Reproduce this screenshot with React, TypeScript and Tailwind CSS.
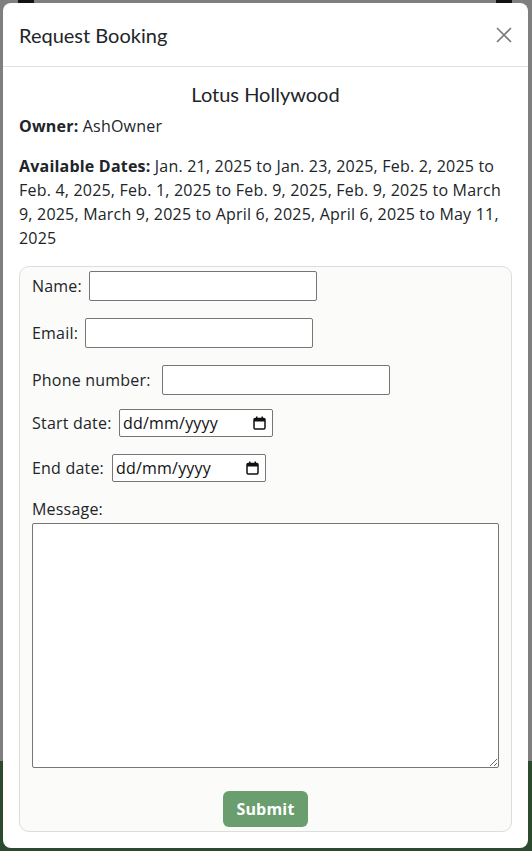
import React from "react";

const body = { fontFamily: '"Open Sans", "Noto Sans", sans-serif' };
const head = { fontFamily: 'Lato, "Open Sans", sans-serif' };

function CalendarIcon() {
  return (
    <svg width="13" height="14" viewBox="0 0 13 14" fill="none">
      <rect x="1" y="2.5" width="11" height="10.5" rx="1.2" stroke="#111" strokeWidth="1.5" />
      <rect x="1" y="2.5" width="11" height="3" fill="#111" />
      <rect x="3" y="0.5" width="1.5" height="3" fill="#111" />
      <rect x="8.5" y="0.5" width="1.5" height="3" fill="#111" />
    </svg>
  );
}

function DateBox() {
  return (
    <div className="flex h-[28px] w-[154px] items-center justify-between rounded-[2px] border border-[#767676] bg-white pl-[3px] pr-[6px] text-[16px] text-[#111]">
      <span>dd/mm/yyyy</span>
      <CalendarIcon />
    </div>
  );
}

export default function App() {
  return (
    <div className="relative h-[851px] w-[532px] overflow-hidden bg-[#7f7f7f] tracking-[0.2px]" style={body}>
      <div className="absolute left-0 right-0 top-[761px] bottom-0 bg-[#2c4a2e]" />
      <div className="absolute left-[18px] top-0 h-[4px] w-[16px] bg-[#121212]" />
      <div className="absolute left-[496px] top-0 h-[4px] w-[16px] bg-[#121212]" />

      <div className="relative ml-[3px] mt-[3px] w-[525px] rounded-[8px] bg-white text-[#212529]">
        <div className="flex items-center justify-between border-b border-[#dee2e6] pb-4 pl-4 pr-[16px] pt-[17px]">
          <h1 className="text-[20px] leading-[30px] tracking-normal text-[#212529]" style={head}>
            Request Booking
          </h1>
          <svg width="16" height="16" viewBox="0 0 16 16">
            <path d="M1 1 L15 15 M15 1 L1 15" stroke="#7a7a7a" strokeWidth="1.6" />
          </svg>
        </div>

        <div className="px-4 pb-4 pt-[15px] text-[16px] leading-[24px]">
          <h2 className="mb-2 text-center text-[20px] leading-[24px] tracking-normal text-[#212529]" style={head}>
            Lotus Hollywood
          </h2>
          <p className="mb-4">
            <span className="font-bold">Owner:</span> AshOwner
          </p>
          <p className="mb-4">
            <b>Available Dates:</b> Jan. 21, 2025 to Jan. 23, 2025, Feb. 2, 2025 to Feb. 4, 2025, Feb. 1,
            2025 to Feb. 9, 2025, Feb. 9, 2025 to March 9, 2025, March 9, 2025 to April 6, 2025, April 6,
            2025 to May 11, 2025
          </p>

          <form className="flex flex-col rounded-[10px] border border-[#dddddd] bg-[#fbfbf9] px-3 pb-[4px] pt-[4px]">
            <div className="flex h-[30px] items-center">
              <label className="w-[57px] shrink-0">Name:</label>
              <input type="text" className="h-[30px] w-[228px] rounded-[2px] border border-[#767676] bg-white" />
            </div>
            <div className="mt-[17px] flex h-[30px] items-center">
              <label className="w-[53px] shrink-0">Email:</label>
              <input type="email" className="h-[30px] w-[228px] rounded-[2px] border border-[#767676] bg-white" />
            </div>
            <div className="mt-[17px] flex h-[30px] items-center">
              <label className="w-[130px] shrink-0">Phone number:</label>
              <input type="tel" className="h-[30px] w-[228px] rounded-[2px] border border-[#767676] bg-white" />
            </div>
            <div className="mt-[14px] flex h-[28px] items-center">
              <label className="w-[87px] shrink-0">Start date:</label>
              <DateBox />
            </div>
            <div className="mt-[17px] flex h-[28px] items-center">
              <label className="w-[80px] shrink-0">End date:</label>
              <DateBox />
            </div>
            <label className="mt-[15px] block leading-[24px]">Message:</label>
            <textarea className="mt-[2px] block h-[245px] w-full rounded-[2px] border border-[#767676] bg-white" />
            <div className="mt-[23px] flex justify-center">
              <button
                type="button"
                className="h-[36px] w-[85px] rounded-[6px] bg-[#6a9e6e] text-[16px] font-bold text-white"
              >
                Submit
              </button>
            </div>
          </form>
        </div>
      </div>
    </div>
  );
}
